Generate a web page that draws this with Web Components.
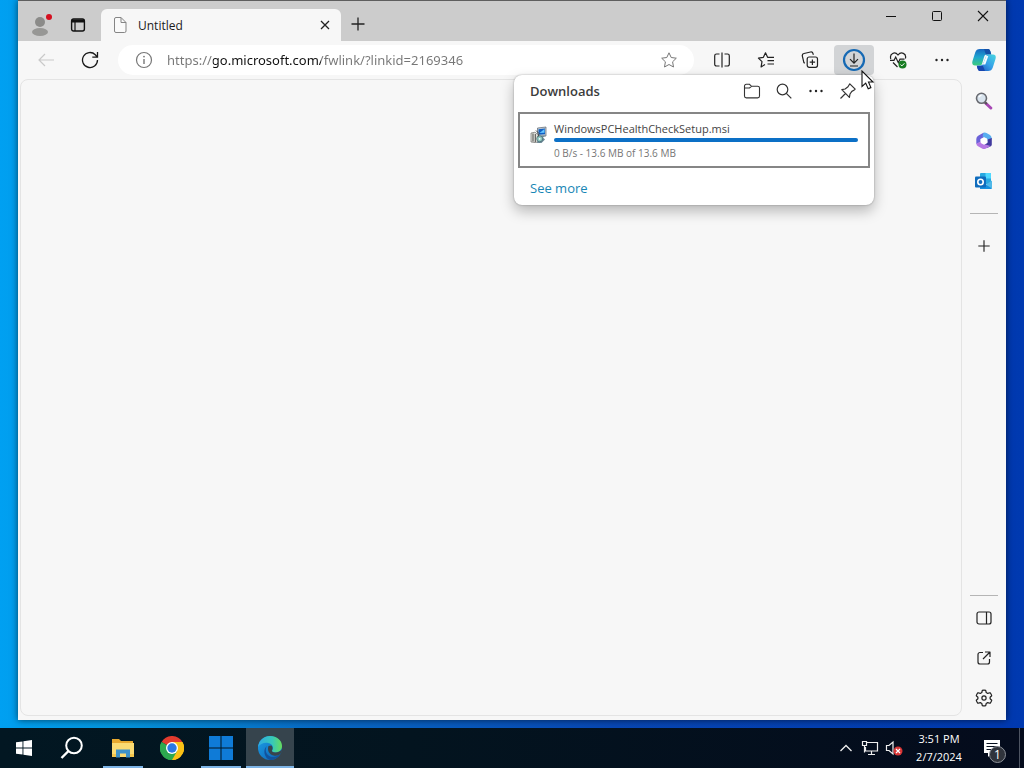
<!DOCTYPE html>
<html lang="en">
<head>
<meta charset="utf-8">
<title>Desktop</title>
<style>
html,body{margin:0;height:100%}
body{font-family:"Open Sans","Noto Sans",sans-serif;font-size:12px;color:#1b1b1b;overflow:hidden}
</style>
</head>
<body>
<desktop-shell>
  <browser-window>
    <tab-strip slot="tabs"><browser-tab>Untitled</browser-tab></tab-strip>
    <tool-bar slot="toolbar">
      <downloads-panel>
        <download-item name="WindowsPCHealthCheckSetup.msi" value="100">0 B/s - 13.6 MB of 13.6 MB</download-item>
      </downloads-panel>
    </tool-bar>
    <side-bar slot="side"></side-bar>
  </browser-window>
  <task-bar slot="taskbar"></task-bar>
</desktop-shell>
<script>
const ICONS = {
  profile: ['24 24', '<circle cx="11" cy="9" r="5" fill="#8b8b89"/><ellipse cx="11" cy="19" rx="8" ry="4" fill="#979795"/><circle cx="20" cy="4" r="3" fill="#d50f1f"/>'],
  tabs: ['16 16', '<g fill="none" stroke="#111"><rect x="1.6" y="2" width="12.8" height="12" rx="2" stroke-width="1.4"/><path d="M2 4h12" stroke-width="3"/><path d="M5 5v9" stroke-width="1.2"/></g>'],
  page: ['16 18', '<path d="M4 1.5h5l5 5V15a1.500 1.500 0 0 1-1.500 1.500h-8.500A1.500 1.500 0 0 1 2.500 15V3A1.500 1.500 0 0 1 4 1.500zM9 1.500V6.500h5" fill="#fafafa" stroke="#858585"/>'],
  close: ['16 16', '<path d="M4 4l8 8M12 4l-8 8" stroke="#222" stroke-width="1.300"/>'],
  plus: ['16 16', '<path d="M1.500 8h13M8 1.500v13" stroke="#222" stroke-width="1.300"/>'],
  min: ['12 12', '<path d="M1 6.500h10" stroke="#111"/>'],
  max: ['12 12', '<rect x="1.500" y="1.500" width="9" height="9" rx="1" fill="none" stroke="#111"/>'],
  winclose: ['12 12', '<path d="M1 1l10 10M11 1L1 11" stroke="#111" stroke-width="1.100"/>'],
  back: ['18 18', '<path d="M17 9H2M8 3L2 9l6 6" fill="none" stroke="#c9c9c9" stroke-width="1.200"/>'],
  reload: ['18 18', '<path d="M16.500 9A7.500 7.500 0 1 1 14.300 3.700L16.300 6M16.500 1v5.200h-5.200" fill="none" stroke="#1a1a1a" stroke-width="1.300"/>'],
  info: ['18 18', '<circle cx="9" cy="9" r="7.500" fill="none" stroke="#777" stroke-width="1.200"/><path d="M9 8v5" stroke="#777" stroke-width="1.400"/><circle cx="9" cy="5.600" r=".9" fill="#777"/>'],
  star: ['18 18', '<path d="M9 1.800l2.200 4.700 5.100.7-3.700 3.600.9 5.200L9 13.500 4.500 16l.9-5.200L1.700 7.200l5.100-.7z" fill="none" stroke="#777" stroke-linejoin="round"/>'],
  split: ['18 18', '<path d="M6.500 3H3.500A1.800 1.800 0 0 0 1.700 4.800v8.400A1.800 1.800 0 0 0 3.500 15h3M11.500 3h3a1.800 1.800 0 0 1 1.800 1.800v8.400a1.800 1.800 0 0 1-1.800 1.800h-3M9 1.500v15" fill="none" stroke="#222" stroke-width="1.200"/>'],
  favs: ['18 18', '<path d="M8 13.500L4.100 15.900 5 10.600 1.400 7.100l5-.8 2.100-4.500 2.100 4.500h6.400M10.500 9.700h6.500M10.500 13h6.500" fill="none" stroke="#222" stroke-width="1.200" stroke-linejoin="round"/>'],
  collections: ['18 18', '<g fill="none" stroke="#222" stroke-width="1.200"><rect x="6.200" y="6" width="10.300" height="10.300" rx="2"/><path d="M11.400 8.500v5.400M8.700 11.200h5.400M3.800 12.200L2.900 11.600 1.300 5A2.200 2.200 0 0 1 3 2.500L9.500 1A2.100 2.100 0 0 1 12 2.500l.4 1.200"/></g>'],
  download: ['24 24', '<circle cx="12" cy="12" r="10" fill="none" stroke="#1569b4" stroke-width="2.200"/><path d="M12 5.500v9.500M8 11.200l4 4 4-4M8 18h8" fill="none" stroke="#222" stroke-width="1.200"/>'],
  health: ['18 18', '<path d="M1.800 8C.2 2.300 6 .2 9 4c3-3.800 8.800-1.700 7.400 3.500M1 9.300h4l1.700-3.200 2.600 5.600L11 8.200h4.500M4 11.500l4.500 4.500" fill="none" stroke="#222" stroke-width="1.200"/><circle cx="13.500" cy="13.500" r="4" fill="#187c22"/><path d="M11.500 13.600l1.400 1.300 2.500-2.600" fill="none" stroke="#fff"/>'],
  more: ['18 18', '<g fill="#222"><circle cx="3.500" cy="9" r="1.200"/><circle cx="9" cy="9" r="1.200"/><circle cx="14.500" cy="9" r="1.200"/></g>'],
  copilot: ['24 24', '<defs><linearGradient id="a" x1="0" y1="0" x2="0" y2="1"><stop offset="0" stop-color="#1766c0"/><stop offset=".5" stop-color="#1fa6cf"/><stop offset="1" stop-color="#3dcc7c"/></linearGradient><linearGradient id="b" x1="1" y1="0" x2="0" y2="1"><stop offset="0" stop-color="#48d6e0"/><stop offset=".5" stop-color="#359fe8"/><stop offset="1" stop-color="#1748b8"/></linearGradient></defs><path d="M8 1h8c1.600 0 2.200 1.500 2.600 3l.7 2.500H15c-2 0-2.600 1.200-3.100 3L10 16c-.6 1.500-1.500 1.500-3 1.500H3C.4 17.500-.2 15.500.5 13L3.200 4.500C4 2 5.500 1 8 1z" fill="url(#a)"/><path d="M12 1h4c1.600 0 2.200 1.500 2.600 3l.7 2.500H14.500C13 6 13 3 12 1z" fill="#1450a8"/><path d="M16 23H8c-1.600 0-2.200-1.500-2.600-3l-.7-2.500H8c2 0 3-1.200 3.600-3l2.400-6c.6-1.700 1.500-2 3-2H21c2.600 0 3.200 2 2.500 4.500l-2.700 8.500C20 22 18.500 23 16 23z" fill="url(#b)"/><path d="M14.300 8h2l-3 8.500h-3.300c1-.4 1.400-1.200 1.800-2.200z" fill="#f2fbff"/><path d="M5 18h6l2 5H8c-1.600 0-2.200-1.500-2.600-3z" fill="#1746ae"/>'],
  folder: ['18 18', '<path d="M1.500 5.500V4A1.700 1.700 0 0 1 3.200 2.300h3.300l2 2h6.200a1.800 1.800 0 0 1 1.800 1.800v8a1.800 1.800 0 0 1-1.800 1.800H3.300a1.800 1.800 0 0 1-1.800-1.800zM1.500 6h5l2-1.700" fill="none" stroke="#333" stroke-width="1.100"/>'],
  find: ['18 18', '<circle cx="7.500" cy="7.500" r="5.300" fill="none" stroke="#333" stroke-width="1.200"/><path d="M11.300 11.300L16.300 16.300" stroke="#333" stroke-width="1.200"/>'],
  pin: ['18 18', '<path d="M10.800 1.800l5.400 5.400c-.3 1-1.500 1.300-3.200 2L11 12l-.6 3.300L2.800 7.700 6.100 7 9 4.800zM6.500 11.500L1.500 16.500" fill="none" stroke="#333" stroke-width="1.200" stroke-linejoin="round"/>'],
  msi: ['18 18', '<path d="M7.500 2l8.500-1v9l-8.500.8z" fill="#c3cbd2" stroke="#5c6670" stroke-width=".7"/><path d="M8.500 3.200L15 2.400v5.800l-6.500.6z" fill="#1160c4"/><path d="M9.500 7l5-4v3.800z" fill="#63c5ff"/><path d="M1 7l4-.8L8.500 9v7L5 16.500 1 16z" fill="#e2e2dc" stroke="#6b6b68" stroke-width=".7"/><path d="M3 7.500v8M5.300 8v8" stroke="#4a4a48"/><path d="M9 9.500h6.500L13 11.500l2 2-3.500 3.500H7z" fill="#6d8a98"/><circle cx="9.700" cy="12.800" r="3" fill="#8ec9c0" stroke="#44616b" stroke-width=".7"/><circle cx="9.700" cy="12.800" r=".9" fill="#fff"/><path d="M6 4.500l3 3-1 3" fill="none" stroke="#444"/>'],
  magnifier: ['18 18', '<path d="M10.500 11l5.300 5" stroke="#a747b4" stroke-width="3" stroke-linecap="round"/><path d="M9.800 10l2 2" stroke="#555" stroke-width="2"/><circle cx="6.500" cy="6.300" r="5" fill="#d9e4ee" stroke="#686a70" stroke-width="1.600"/><path d="M3.800 5.300a3 3 0 0 1 2.700-2" fill="none" stroke="#fff" stroke-width="1.200"/>'],
  m365: ['18 18', '<path d="M8.500.8l-5 2.700Q1.300 4.800 1.300 7v5L5.500 10V7L11 4z" fill="#6b62d8"/><path d="M8.500.8Q10 .2 11.500 1l3.500 2Q16.800 4.500 16.800 7L12.500 9 12 6.600 7.500 4.500z" fill="#58aef0"/><path d="M16.800 6v6.500q0 1-1 1.700L12 16l-3-3.500 3.500-2V7.500z" fill="#413a9e"/><path d="M1.300 11.500q.2 2 1.700 2.700l4.500 2.500Q9 17.500 10.500 16.700L15.500 14l-5-1.500-5-2.700z" fill="#b678e4"/><path d="M9 5.500l3.300 1.800v3.700L9 12.800l-3.300-1.800V7.300z" fill="#fff"/>'],
  outlook: ['18 18', '<path d="M6 1h9a1 1 0 0 1 1 1v10H5V2a1 1 0 0 1 1-1z" fill="#28a8e0"/><path d="M10.500 1H16v5.500h-5.500z" fill="#50d9ff"/><path d="M5 6h5.500v6H5z" fill="#0763ad"/><path d="M5 16.500l12-8V15.500a1.500 1.500 0 0 1-1.500 1.500H5z" fill="#50b8e8"/><path d="M5 9l12 7.500-1.500.5H5z" fill="#1490df"/><rect x="0" y="4.500" width="11" height="11" rx="1" fill="#0f6cbd"/><circle cx="5.500" cy="10" r="2.700" fill="none" stroke="#fff" stroke-width="1.600"/>'],
  panel: ['18 18', '<g fill="none" stroke="#222" stroke-width="1.200"><rect x="2" y="3" width="14" height="12" rx="2"/><path d="M11.500 3v12"/></g>'],
  external: ['18 18', '<path d="M8 3.500H5A2 2 0 0 0 3 5.500V13a2 2 0 0 0 2 2h7.500a2 2 0 0 0 2-2V10M10 3h5v5M15 3L8 10" fill="none" stroke="#222" stroke-width="1.200" stroke-linejoin="round"/>'],
  gear: ['18 18', '<path d="M7.300 1.300Q9 .8 10.700 1.300L11.200 3.500 12.700 4.400 15 3.700Q16.200 5 16.700 6.700L15.100 8.200V9.800L16.700 11.300Q16.200 13 15 14.300L12.700 13.600 11.200 14.500 10.700 16.700Q9 17.200 7.300 16.700L6.800 14.500 5.300 13.600 3 14.300Q1.800 13 1.300 11.300L2.900 9.800V8.200L1.300 6.700Q1.800 5 3 3.700L5.300 4.400 6.800 3.500z" fill="none" stroke="#222" stroke-width="1.200" stroke-linejoin="round"/><circle cx="9" cy="9" r="2.100" fill="none" stroke="#222" stroke-width="1.200"/>'],
  cursor: ['14 20', '<path d="M1 1v15.500l3.700-3.400 2.500 5.700 2.700-1.200L7.500 12H12z" fill="#fff" stroke="#111" stroke-width="1.100"/>'],
  start: ['16 16', '<path d="M0 2.300L6.500 1.400V7.500H0zM7.400 1.200L16 0V7.500H7.400zM0 8.400H6.500V14.600L0 13.700zM7.400 8.400H16V16L7.400 14.800z" fill="#fff"/>'],
  search: ['24 24', '<circle cx="14" cy="9.500" r="7.800" fill="none" stroke="#fff" stroke-width="2"/><path d="M8.500 15L1.500 22" stroke="#fff" stroke-width="2.400"/>'],
  explorer: ['24 24', '<path d="M1 3h7l2 2h12v16H1z" fill="#e8a92f"/><path d="M1 7h22v14H1z" fill="#fbdb73"/><path d="M5 13.500h14V21.500h-4v-4H9v4H5z" fill="#3e92c9"/><path d="M1 18h4v3H1zM19 18h4v3h-4z" fill="#f5c64c"/>'],
  chrome: ['24 24', '<path d="M12 12L1.600 6A12 12 0 0 1 22.400 6z" fill="#e33b2e"/><path d="M12 12L22.400 6A12 12 0 0 1 12 24z" fill="#fbc116"/><path d="M12 12V24A12 12 0 0 1 1.600 6z" fill="#2da94f"/><path d="M12 6h10.400A12 12 0 0 1 12 24l5.200-9z" fill="#fbc116"/><path d="M1.600 6L6.800 15h10.400L12 24A12 12 0 0 1 1.600 6z" fill="#2da94f"/><circle cx="12" cy="12" r="6" fill="#fff"/><circle cx="12" cy="12" r="4.700" fill="#2b78e4"/>'],
  tiles: ['24 24', '<path d="M0 0h11.500v11.500H0zM12.500 0H24v11.500H12.500zM0 12.500h11.500V24H0zM12.500 12.500H24V24H12.500z" fill="#0f7bd7"/>'],
  edge: ['24 24', '<defs><linearGradient id="t" x1="0" x2="1"><stop offset="0" stop-color="#2fa9e4"/><stop offset=".6" stop-color="#37c9b8"/><stop offset="1" stop-color="#67dc5c"/></linearGradient><linearGradient id="l" x1="0" y1="0" x2="1" y2="1"><stop offset="0" stop-color="#1ba0e8"/><stop offset="1" stop-color="#0d5db0"/></linearGradient></defs><circle cx="12" cy="12" r="12" fill="url(#l)"/><path d="M0 11C1 4 6 0 12 0c7 0 12 4.500 12 10 0 4-3 6.500-6.500 6.500-3 0-4-1.300-3.300-2.300 1.500-2 1-6.200-4-7.200C6 6.200 2 8 0 11z" fill="url(#t)"/><path d="M9 10c-3 4-.5 11 6 11 3.500 0 6-1.500 7.500-3.500C20.500 21.500 16.500 24 12 24 6 22 4.500 13 9 10z" fill="#12529c"/><path d="M13.500 9.500c1.300 1.500 1.300 3.500.5 4.800-.7 1.300.8 2.300 3.500 2.200 2.500 0 4.700-.8 6.200-2.700l.3.500c-.3 1.300-.7 2.300-1.300 3.200-2 2-4.500 2.500-7 2C11 18.500 9 14 10.500 10z" fill="#39444b"/>'],
  chevron: ['14 14', '<path d="M1.500 10L7 4.500 12.500 10" fill="none" stroke="#eee" stroke-width="1.300"/>'],
  network: ['18 18', '<path d="M5.500 3.500H16.500v8.500H4.500V8M10.500 12v3M7 15.500h7M1.500 2.500h4v4h-4zM3.500 6.500v7" fill="none" stroke="#eee" stroke-width="1.200"/>'],
  volume: ['18 18', '<path d="M1.500 6.500h2.500L8 3v12l-4-3.500H1.500z" fill="none" stroke="#eee" stroke-width="1.200"/><circle cx="13" cy="12" r="4.500" fill="#d93636"/><path d="M11 10l4 4M15 10l-4 4" stroke="#fff" stroke-width="1.200"/>'],
  message: ['18 18', '<path d="M1 1h16v13H9l-4 4v-4H1z" fill="#fff"/><path d="M3.500 4.500h11M3.500 7.500h11M3.500 10.500h7" stroke="#07101f" stroke-width="1.200"/>']
};

class Base extends HTMLElement {
  constructor() {
    super();
    this.attachShadow({ mode: 'open' });
  }
  paint(css, html) {
    this.shadowRoot.innerHTML = `<style>:host,*{box-sizing:border-box}button{all:unset;box-sizing:border-box;display:grid;place-items:center;cursor:default}${css}</style>${html}`;
  }
}

customElements.define('ui-icon', class extends Base {
  connectedCallback() {
    const [box, body] = ICONS[this.getAttribute('name')];
    const [w, h] = box.split(' ');
    const size = this.getAttribute('size') || w;
    this.paint(':host{display:block;flex:none;line-height:0}svg{display:block}',
      `<svg width="${size}" height="${Math.round(size * h / w)}" viewBox="0 0 ${box}" aria-hidden="true">${body}</svg>`);
  }
});

customElements.define('desktop-shell', class extends Base {
  connectedCallback() {
    this.paint(`
      :host{display:flex;flex-direction:column;height:100vh;background:linear-gradient(90deg,#00a0f1 0%,#0594dc 12%,#0868c4 32%,#0847b4 60%,#0039b0 100%)}
      main{flex:1;min-height:0;display:flex;padding:0 18px 8px}`,
      '<main><slot></slot></main><slot name="taskbar"></slot>');
  }
});

customElements.define('browser-window', class extends Base {
  connectedCallback() {
    this.paint(`
      :host{flex:1;min-width:0;display:flex;flex-direction:column;background:#f7f7f7;border-top:1px solid #5e5e5e;box-shadow:0 0 7px #0009}
      .body{flex:1;min-height:0;display:flex;padding:0 0 2px 2px}
      article{flex:1;margin-bottom:2px;border:1px solid #e4e4e4;border-radius:8px;background:#f7f7f7}`,
      `<slot name="tabs"></slot><slot name="toolbar"></slot>
       <div class="body"><article aria-label="Page content"></article><slot name="side"></slot></div>`);
  }
});

customElements.define('tab-strip', class extends Base {
  connectedCallback() {
    this.paint(`
      :host{display:flex;height:40px;background:#ccc;padding-left:5px}
      .tool{width:38px;height:32px;margin-top:8px}
      .tool.first{width:36px}
      .tabs{display:flex;align-items:flex-end;margin-left:4px}
      .new{width:34px;height:30px;margin-top:8px}
      .win{margin-left:auto;display:flex}
      .win button{width:46px;height:30px}`,
      `<button class="tool first" aria-label="Profile"><ui-icon name="profile"></ui-icon></button>
       <button class="tool" aria-label="Tab actions"><ui-icon name="tabs"></ui-icon></button>
       <div class="tabs"><slot></slot></div>
       <button class="new" aria-label="New tab"><ui-icon name="plus"></ui-icon></button>
       <div class="win">
         <button aria-label="Minimize"><ui-icon name="min"></ui-icon></button>
         <button aria-label="Maximize"><ui-icon name="max"></ui-icon></button>
         <button aria-label="Close"><ui-icon name="winclose"></ui-icon></button>
       </div>`);
  }
});

customElements.define('browser-tab', class extends Base {
  connectedCallback() {
    this.paint(`
      :host{display:flex;align-items:center;gap:10px;width:240px;height:32px;padding:0 4px 0 11px;background:#f7f7f7;border-radius:6px 6px 0 0}
      span{flex:1}
      button{width:24px;height:24px}`,
      `<ui-icon name="page"></ui-icon><span><slot></slot></span>
       <button aria-label="Close tab"><ui-icon name="close"></ui-icon></button>`);
  }
});

customElements.define('tool-bar', class extends Base {
  connectedCallback() {
    this.paint(`
      :host{display:flex;align-items:center;gap:4px;height:38px;padding:0 2px 0 8px}
      button{width:40px;height:30px;border-radius:4px}
      .address{flex:1;min-width:0;display:flex;align-items:center;gap:14px;height:30px;margin:0 4px;padding:0 16px 0 17px;border-radius:15px;background:#fff}
      label{display:block}
      input{flex:1;min-width:0;height:24px;padding:0;border:0;outline:0;font:13px "Noto Sans","Open Sans",sans-serif;color:#767676;
        background:linear-gradient(90deg,#767676 46px,#111 46px,#111 154px,#767676 154px);
        -webkit-background-clip:text;background-clip:text;-webkit-text-fill-color:transparent}
      .address button{width:18px}
      .downloads{position:relative}
      .downloads>button{background:#d2d4d6}
      .pop{position:absolute;z-index:1;top:100%;right:0}
      .pointer{position:absolute;z-index:2;top:25px;left:27px}
      nav{display:flex;gap:4px}
      .copilot{margin-left:-2px}`,
      `<button aria-label="Back" disabled><ui-icon name="back"></ui-icon></button>
       <button aria-label="Refresh"><ui-icon name="reload"></ui-icon></button>
       <div class="address">
         <label for="url" aria-label="Address"><ui-icon name="info"></ui-icon></label>
         <input id="url" type="text" spellcheck="false" value="https://go.microsoft.com/fwlink/?linkid=2169346">
         <button aria-label="Add to favorites"><ui-icon name="star"></ui-icon></button>
       </div>
       <nav>
         <button aria-label="Split screen"><ui-icon name="split"></ui-icon></button>
         <button aria-label="Favorites"><ui-icon name="favs"></ui-icon></button>
         <button aria-label="Collections"><ui-icon name="collections"></ui-icon></button>
         <div class="downloads">
           <button aria-label="Downloads" aria-expanded="true"><ui-icon name="download"></ui-icon></button>
           <div class="pop"><slot></slot></div>
           <ui-icon class="pointer" name="cursor"></ui-icon>
         </div>
         <button aria-label="Browser essentials"><ui-icon name="health"></ui-icon></button>
         <button aria-label="Settings and more"><ui-icon name="more"></ui-icon></button>
         <button class="copilot" aria-label="Copilot"><ui-icon name="copilot"></ui-icon></button>
       </nav>`);
  }
});

customElements.define('downloads-panel', class extends Base {
  connectedCallback() {
    this.paint(`
      :host{display:block;width:360px;background:#fff;border-radius:8px;box-shadow:0 6px 14px #0004,0 0 2px #0005}
      header{display:flex;align-items:center;height:32px;padding:0 10px 0 16px}
      h2{flex:1;margin:0;font-size:13px;font-weight:600;color:#3c3c3c}
      header button{width:32px;height:30px}
      .list{padding:5px 4px 0}
      footer{padding:10px 16px 7px}
      a{display:block;width:max-content;font-size:13px;line-height:20px;color:#1786b5;text-decoration:none}`,
      `<header><h2>Downloads</h2>
         <button aria-label="Open downloads folder"><ui-icon name="folder"></ui-icon></button>
         <button aria-label="Search downloads"><ui-icon name="find"></ui-icon></button>
         <button aria-label="More options"><ui-icon name="more"></ui-icon></button>
         <button aria-label="Pin downloads"><ui-icon name="pin"></ui-icon></button>
       </header>
       <div class="list"><slot></slot></div>
       <footer><a href="#downloads">See more</a></footer>`);
  }
});

customElements.define('download-item', class extends Base {
  connectedCallback() {
    this.paint(`
      :host{display:flex;gap:6px;height:56px;padding:7px 10px 0;border:2px solid #868686}
      ui-icon{margin-top:5px}
      .info{flex:1;min-width:0;display:flex;flex-direction:column}
      label{font-size:11px;line-height:16px;color:#444}
      progress{appearance:none;display:block;width:100%;height:4px;margin:1px 0 3px;border:0;border-radius:2px;overflow:hidden;background:#ddd}
      progress::-webkit-progress-bar{background:#ddd}
      progress::-webkit-progress-value{background:#0c70c6}
      small{font-size:10px;line-height:16px;color:#767676}`,
      `<ui-icon name="msi"></ui-icon>
       <div class="info"><label for="p">${this.getAttribute('name')}</label>
       <progress id="p" max="100" value="${this.getAttribute('value')}"></progress>
       <small><slot></slot></small></div>`);
  }
});

customElements.define('side-bar', class extends Base {
  connectedCallback() {
    this.paint(`
      :host{display:flex;flex-direction:column;align-items:center;width:44px;padding-top:2px}
      button{width:40px;height:40px}
      hr{width:28px;height:1px;margin:12px 0;border:0;background:#b5b5b5}
      .bottom{margin-top:auto}
      .bottom hr{margin:0 6px 2px}`,
      `<button aria-label="Search"><ui-icon name="magnifier"></ui-icon></button>
       <button aria-label="Microsoft 365"><ui-icon name="m365"></ui-icon></button>
       <button aria-label="Outlook"><ui-icon name="outlook"></ui-icon></button>
       <hr>
       <button aria-label="Customize"><ui-icon name="plus" size="14"></ui-icon></button>
       <div class="bottom"><hr>
         <button aria-label="Hide sidebar"><ui-icon name="panel"></ui-icon></button>
         <button aria-label="Open in new window"><ui-icon name="external"></ui-icon></button>
         <button aria-label="Settings"><ui-icon name="gear"></ui-icon></button>
       </div>`);
  }
});

customElements.define('task-bar', class extends Base {
  connectedCallback() {
    this.paint(`
      :host{display:flex;height:40px;color:#fff;background:linear-gradient(90deg,#021722,#03141f 40%,#040b1c)}
      button{width:48px;height:40px}
      .apps{display:flex;gap:1px;margin-left:3px}
      .apps button{position:relative}
      .run::after{content:"";position:absolute;left:4px;right:4px;bottom:0;height:2px;background:#7db4e6}
      .active{background:#36444d}
      .active::after{left:0;right:0}
      .tray{display:flex;margin-left:auto}
      .tray button{width:24px}
      .tray .clock{width:52px;margin-left:7px;line-height:18px;text-align:center;font-size:11px}
      .clock span{display:block}
      .tray .note{width:54px;position:relative}
      .badge{position:absolute;left:24px;top:18px;width:17px;height:17px;border:1px solid #8d9199;border-radius:50%;background:#30343c;font-size:12px;line-height:15px;text-align:center}
      .tray .peek{width:5px;border-left:1px solid #4d5462}`,
      `<button aria-label="Start"><ui-icon name="start"></ui-icon></button>
       <button aria-label="Search"><ui-icon name="search"></ui-icon></button>
       <div class="apps">
         <button class="run" aria-label="File Explorer"><ui-icon name="explorer"></ui-icon></button>
         <button aria-label="Google Chrome"><ui-icon name="chrome"></ui-icon></button>
         <button class="run" aria-label="Windows setup"><ui-icon name="tiles"></ui-icon></button>
         <button class="run active" aria-label="Microsoft Edge"><ui-icon name="edge"></ui-icon></button>
       </div>
       <div class="tray">
         <button aria-label="Show hidden icons"><ui-icon name="chevron"></ui-icon></button>
         <button aria-label="Network"><ui-icon name="network"></ui-icon></button>
         <button aria-label="Volume muted"><ui-icon name="volume"></ui-icon></button>
         <button class="clock"><div><span>3:51 PM</span><span>2/7/2024</span></div></button>
         <button class="note" aria-label="Notifications"><ui-icon name="message"></ui-icon><span class="badge">1</span></button>
         <button class="peek" aria-label="Show desktop"></button>
       </div>`);
  }
});
</script>
</body>
</html>
